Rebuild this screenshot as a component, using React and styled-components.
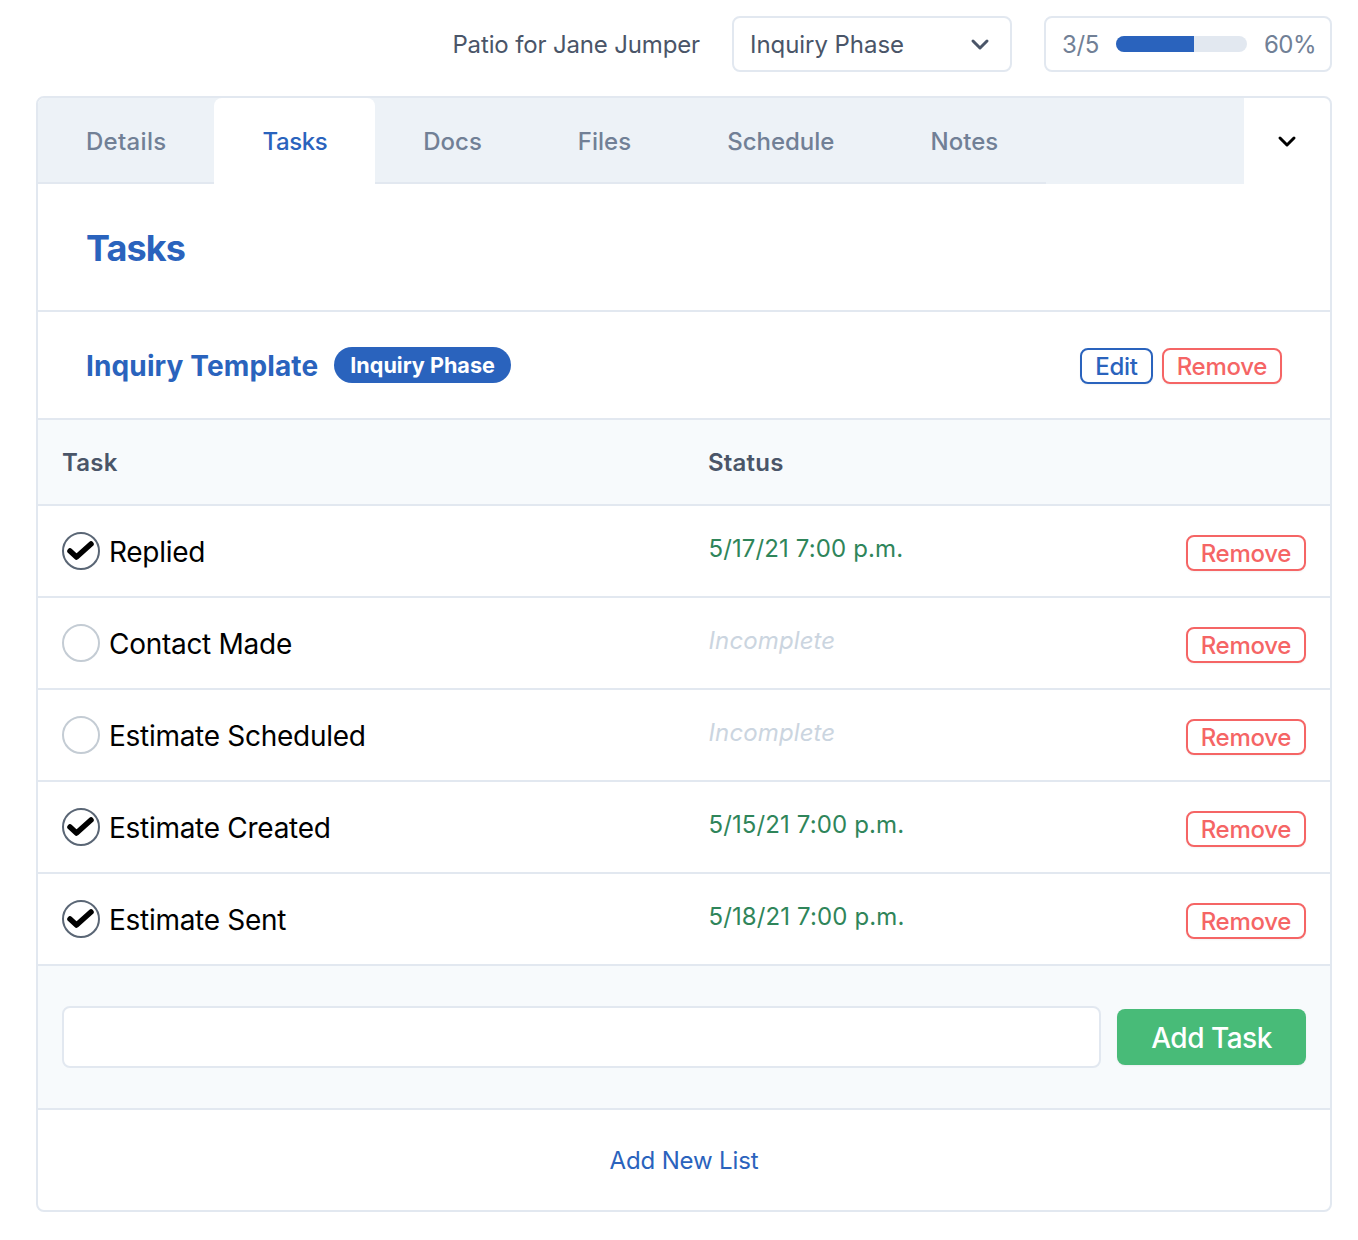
import React from "react";
import styled, { createGlobalStyle } from "styled-components";

const Global = createGlobalStyle`
  * { box-sizing: border-box; }
  html, body { margin: 0; padding: 0; background: #fff; }
  body { font-family: Inter, "Noto Sans", sans-serif; }
`;

const Page = styled.div`
  width: 1358px;
  height: 1240px;
  padding: 16px 26px 0 36px;
`;

const TopBar = styled.header`
  display: flex;
  align-items: center;
  justify-content: flex-end;
  height: 56px;
  margin-bottom: 24px;
`;

const ProjectName = styled.div`
  font-size: 24px;
  letter-spacing: -0.15px;
  color: #4a5568;
  margin-right: 32px;
`;

const SelectBox = styled.div`
  display: flex;
  align-items: center;
  justify-content: space-between;
  width: 280px;
  height: 56px;
  padding: 0 18px 0 16px;
  margin-right: 32px;
  border: 2px solid #e2e8f0;
  border-radius: 8px;
  font-size: 24px;
  letter-spacing: -0.05px;
  color: #4a5568;
`;

const ProgressBox = styled.div`
  display: flex;
  align-items: center;
  width: 288px;
  height: 56px;
  padding: 0 16px;
  border: 2px solid #e2e8f0;
  border-radius: 8px;
  font-size: 24px;
  letter-spacing: -0.4px;
  color: #718096;
`;

const Track = styled.div`
  flex: none;
  width: 131px;
  height: 16px;
  margin: 0 17px;
  background: #e2e8f0;
  border-radius: 8px;
  overflow: hidden;
`;

const Fill = styled.div`
  height: 100%;
  background: #2a63bd;
`;

const Card = styled.main`
  width: 1296px;
  height: 1116px;
  border: 2px solid #e2e8f0;
  border-radius: 8px;
  overflow: hidden;
`;

const TabStrip = styled.nav`
  display: flex;
  height: 86px;
`;

const TabList = styled.div`
  display: flex;
  flex: 1;
  background: #edf2f7;
`;

const Tab = styled.div`
  display: flex;
  align-items: center;
  height: 86px;
  padding: 2px 48px 0;
  font-size: 24px;
  font-weight: 500;
  letter-spacing: ${(p) => p.$tracking}px;
  color: ${(p) => (p.$active ? "#2a63bd" : "#718096")};
  background: ${(p) => (p.$active ? "#fff" : "transparent")};
  border-bottom: 2px solid ${(p) => (p.$active ? "#fff" : "#e2e8f0")};
  border-radius: ${(p) => (p.$active ? "8px 8px 0 0" : "0")};
`;

const TabMore = styled.div`
  display: flex;
  align-items: center;
  justify-content: center;
  width: 86px;
  height: 86px;
  color: #000;
`;

const TitleSection = styled.section`
  display: flex;
  align-items: center;
  height: 128px;
  padding: 2px 48px 0;
  border-bottom: 2px solid #e2e8f0;
`;

const Title = styled.h1`
  margin: 0;
  font-size: 36px;
  font-weight: 700;
  letter-spacing: -0.9px;
  color: #2a63bd;
`;

const TemplateSection = styled.section`
  display: flex;
  align-items: center;
  justify-content: space-between;
  height: 108px;
  padding: 0 48px;
  border-bottom: 2px solid #e2e8f0;
`;

const TemplateName = styled.div`
  display: flex;
  align-items: center;
  gap: 16px;
`;

const Subtitle = styled.h2`
  margin: 2px 0 0;
  font-size: 28px;
  font-weight: 700;
  letter-spacing: 0.13px;
  color: #2a63bd;
`;

const Badge = styled.span`
  display: inline-flex;
  align-items: center;
  height: 36px;
  padding: 0 16px;
  border-radius: 18px;
  background: #2a63bd;
  color: #fff;
  font-size: 21.6px;
  font-weight: 700;
`;

const Actions = styled.div`
  display: flex;
  gap: 9px;
  margin-top: 2px;
`;

const OutlineButton = styled.button`
  height: 36px;
  padding: 2px 13px 0;
  background: #fff;
  border: 2px solid ${(p) => (p.$danger ? "#f56565" : "#2a63bd")};
  border-radius: 8px;
  color: ${(p) => (p.$danger ? "#f56565" : "#2a63bd")};
  font-family: inherit;
  font-size: 24px;
  font-weight: 500;
  letter-spacing: -0.3px;
  line-height: 1;
  box-shadow: 0 1px 2px rgba(0, 0, 0, 0.05);
`;

const HeadRow = styled.div`
  display: grid;
  grid-template-columns: 646px 1fr;
  align-items: center;
  height: 86px;
  padding: 0 24px;
  background: #f7fafc;
  border-bottom: 2px solid #e2e8f0;
  font-size: 24px;
  font-weight: 600;
  letter-spacing: 0.2px;
  color: #4a5568;
`;

const Row = styled.div`
  display: grid;
  grid-template-columns: 646px 1fr auto;
  align-items: center;
  height: 92px;
  padding: 4px 24px 0;
  border-bottom: 2px solid #e2e8f0;
`;

const TaskCell = styled.div`
  display: flex;
  align-items: center;
  gap: 9px;
  margin-top: -2px;
  font-size: 28px;
  letter-spacing: -0.28px;
  color: #000;
`;

const Check = styled.span`
  display: flex;
  align-items: center;
  justify-content: center;
  width: 38px;
  height: 38px;
  margin-top: -2px;
  border: 2px solid ${(p) => (p.$done ? "#5a6675" : "#c4ccd4")};
  border-radius: 50%;
  background: #fff;
`;

const Status = styled.div`
  margin-top: -10px;
  padding-left: 0.5px;
  font-size: 24px;
  letter-spacing: 0.12px;
  color: ${(p) => (p.$done ? "#2f855a" : "#cbd5e0")};
  font-style: ${(p) => (p.$done ? "normal" : "italic")};
`;

const AddSection = styled.section`
  display: flex;
  align-items: center;
  gap: 16px;
  height: 144px;
  padding: 0 24px;
  background: #f7fafc;
  border-bottom: 2px solid #e2e8f0;
`;

const TextInput = styled.input`
  flex: 1;
  height: 62px;
  background: #fff;
  border: 2px solid #e2e8f0;
  border-radius: 8px;
  outline: none;
`;

const AddButton = styled.button`
  width: 189px;
  height: 56px;
  padding-top: 2px;
  background: #48bb78;
  border: 0;
  border-radius: 8px;
  color: #fff;
  font-family: inherit;
  font-size: 28px;
  font-weight: 500;
  letter-spacing: -0.5px;
  box-shadow: 0 1px 2px rgba(0, 0, 0, 0.05);
`;

const Footer = styled.footer`
  display: flex;
  align-items: center;
  justify-content: center;
  height: 100px;
  font-size: 24px;
  letter-spacing: -0.15px;
  color: #2a63bd;
`;

const Chevron = ({ size = 24, width = 3 }) => (
  <svg width={size} height={size} viewBox="0 0 24 24" fill="none" stroke="currentColor" strokeWidth={width} strokeLinecap="round" strokeLinejoin="round">
    <path d="M5 9l7 7 7-7" />
  </svg>
);

const Tick = () => (
  <svg width="30" height="26" viewBox="0 0 30 26" fill="none" stroke="#000" strokeWidth="5.5" strokeLinecap="round" strokeLinejoin="round">
    <path d="M4 13l6.5 6L25 6" />
  </svg>
);

const tabs = [
  ["Details", 0.3],
  ["Tasks", -0.4],
  ["Docs", 0],
  ["Files", 0],
  ["Schedule", 0],
  ["Notes", 0.05],
];
const tasks = [
  ["Replied", "5/17/21 7:00 p.m."],
  ["Contact Made", null],
  ["Estimate Scheduled", null],
  ["Estimate Created", "5/15/21 7:00 p.m."],
  ["Estimate Sent", "5/18/21 7:00 p.m."],
];

export default function App() {
  return (
    <Page>
      <Global />
      <TopBar>
        <ProjectName>Patio for Jane Jumper</ProjectName>
        <SelectBox>
          Inquiry Phase
          <Chevron />
        </SelectBox>
        <ProgressBox>
          3/5
          <Track>
            <Fill style={{ width: "60%" }} />
          </Track>
          60%
        </ProgressBox>
      </TopBar>
      <Card>
        <TabStrip>
          <TabList>
            {tabs.map(([t, tracking]) => (
              <Tab key={t} $active={t === "Tasks"} $tracking={tracking}>{t}</Tab>
            ))}
          </TabList>
          <TabMore>
            <Chevron />
          </TabMore>
        </TabStrip>
        <TitleSection>
          <Title>Tasks</Title>
        </TitleSection>
        <TemplateSection>
          <TemplateName>
            <Subtitle>Inquiry Template</Subtitle>
            <Badge>Inquiry Phase</Badge>
          </TemplateName>
          <Actions>
            <OutlineButton>Edit</OutlineButton>
            <OutlineButton $danger>Remove</OutlineButton>
          </Actions>
        </TemplateSection>
        <HeadRow>
          <div>Task</div>
          <div>Status</div>
        </HeadRow>
        {tasks.map(([name, date]) => (
          <Row key={name}>
            <TaskCell>
              <Check $done={!!date}>{date && <Tick />}</Check>
              {name}
            </TaskCell>
            <Status $done={!!date}>{date || "Incomplete"}</Status>
            <OutlineButton $danger>Remove</OutlineButton>
          </Row>
        ))}
        <AddSection>
          <TextInput />
          <AddButton>Add Task</AddButton>
        </AddSection>
        <Footer>Add New List</Footer>
      </Card>
    </Page>
  );
}
